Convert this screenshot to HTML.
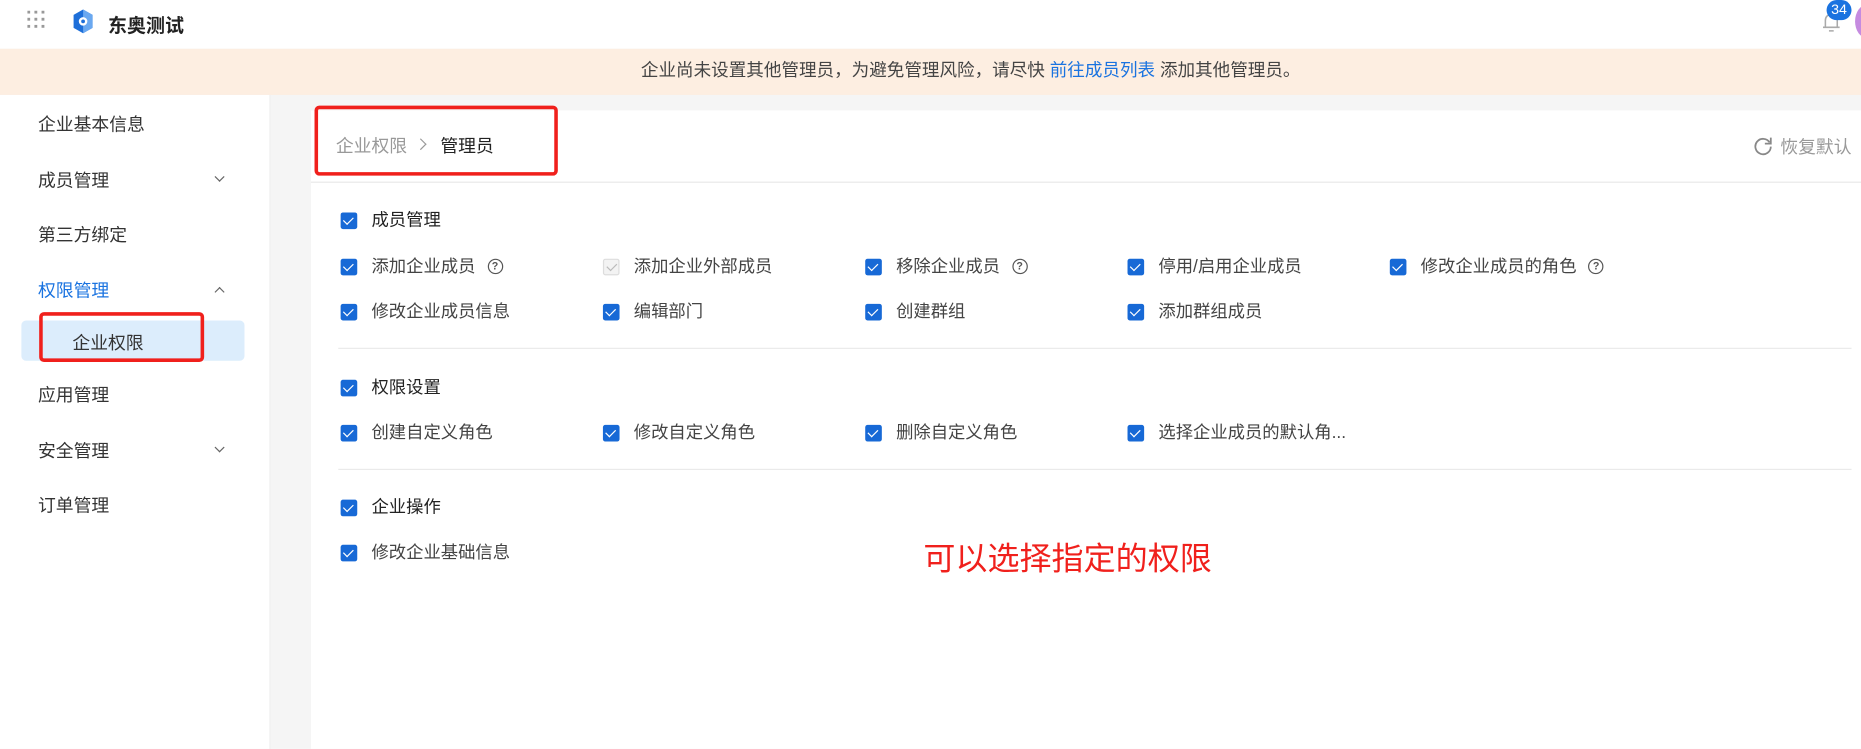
<!DOCTYPE html>
<html><head><meta charset="utf-8">
<style>
*{margin:0;padding:0;box-sizing:border-box}
html,body{width:1861px;height:749px;overflow:hidden;background:#fff}
body{font-family:"Liberation Sans","Noto Sans CJK SC",sans-serif;color:#333}
#w{position:absolute;left:0;top:0;width:1568px;height:631px;transform:scale(1.18686);transform-origin:0 0;background:#f5f5f5}
.a{position:absolute;white-space:nowrap}
.cb{position:absolute;width:14px;height:14px;background:#1769d6;border-radius:2px}
.cb:after{content:"";position:absolute;left:4px;top:1.5px;width:4px;height:7px;border:solid #fff;border-width:0 1.6px 1.6px 0;transform:rotate(45deg)}
.cb.d{background:#f3f3f3;border:1px solid #ddd}
.cb.d:after{border-color:#bbb;left:3.5px;top:0.5px}
.t{font-size:14.6px;color:#444;line-height:16px}
.q{display:inline-block;width:13px;height:13px;border:1.2px solid #555;border-radius:50%;font-size:9px;line-height:11px;text-align:center;color:#555;margin-left:10px;vertical-align:2px;font-weight:bold}
.side{font-size:15px;color:#333}
.chev{position:absolute;width:6px;height:6px;border:solid #666;border-width:0 1.3px 1.3px 0}
.red{position:absolute;border:3px solid #f0201c;border-radius:4px}
</style></head><body><div id="w">
<div class="a" style="left:0;top:0;width:1568px;height:41px;background:#fff"></div>
<svg class="a" style="left:23px;top:9px" width="16" height="16"><g fill="#999"><rect x="0" y="0" width="2.4" height="2.4"/><rect x="6" y="0" width="2.4" height="2.4"/><rect x="12" y="0" width="2.4" height="2.4"/><rect x="0" y="6" width="2.4" height="2.4"/><rect x="6" y="6" width="2.4" height="2.4"/><rect x="12" y="6" width="2.4" height="2.4"/><rect x="0" y="12" width="2.4" height="2.4"/><rect x="6" y="12" width="2.4" height="2.4"/><rect x="12" y="12" width="2.4" height="2.4"/></g></svg>
<svg class="a" style="left:61px;top:7px" width="18" height="22" viewBox="0 0 18 22"><path d="M9 1 L17 5.5 V16.5 L9 21 L1 16.5 V5.5Z" fill="#1e6fd9"/><path d="M9 1 L17 5.5 V16.5 L9 21Z" fill="#6aa8f0"/><circle cx="9" cy="11" r="3.6" fill="#fff"/><circle cx="9" cy="11" r="1.6" fill="#1e6fd9"/></svg>
<div class="a" style="left:91px;top:8px;font-size:16px;font-weight:bold;color:#222">东奥测试</div>
<svg class="a" style="left:1535px;top:10px" width="16" height="18"><path d="M3 13V7a5 5 0 0 1 10 0v6M1 13h14M6 16h4" stroke="#aaa" stroke-width="1.3" fill="none"/></svg>
<div class="a" style="left:1539px;top:0;width:21px;height:17px;border-radius:9px;background:#1a73e0;color:#fff;font-size:12px;line-height:17px;text-align:center">34</div>
<div class="a" style="left:1563px;top:4px;width:20px;height:28px;border-radius:50%;background:#c58be0"></div>
<div class="a" style="left:540px;top:41px;height:39px;font-size:14.8px;line-height:39px;color:#444">企业尚未设置其他管理员，为避免管理风险，请尽快 <span style="color:#1a73e0">前往成员列表</span> 添加其他管理员。</div>
<div class="a" style="left:0;top:41px;width:1568px;height:39px;background:#fdeee1;z-index:-1"></div>
<div class="a" style="left:0;top:80px;width:228px;height:551px;background:#fff;border-right:1px solid #eee"></div>
<div class="a side" style="left:32px;top:94px">企业基本信息</div>
<div class="a side" style="left:32px;top:141px">成员管理</div><div class="chev" style="left:182px;top:146px;transform:rotate(45deg)"></div>
<div class="a side" style="left:32px;top:187px">第三方绑定</div>
<div class="a side" style="left:32px;top:234px;color:#1a73e0">权限管理</div><div class="chev" style="left:182px;top:243px;transform:rotate(-135deg)"></div>
<div class="a" style="left:18px;top:270px;width:188px;height:34px;background:#dcedfc;border-radius:4px"></div>
<div class="a side" style="left:61px;top:278px">企业权限</div>
<div class="a side" style="left:32px;top:322px">应用管理</div>
<div class="a side" style="left:32px;top:369px">安全管理</div><div class="chev" style="left:182px;top:374px;transform:rotate(45deg)"></div>
<div class="a side" style="left:32px;top:415px">订单管理</div>
<div class="red" style="left:33px;top:263px;width:139px;height:42px"></div>
<div class="a" style="left:262px;top:93px;width:1306px;height:538px;background:#fff"></div>
<div class="a" style="left:283px;top:112px;font-size:15px;color:#999">企业权限</div>
<div class="chev" style="left:351px;top:118px;width:7px;height:7px;border-color:#999;transform:rotate(-45deg)"></div>
<div class="a" style="left:371px;top:112px;font-size:15px;color:#222">管理员</div>
<div class="red" style="left:265px;top:89px;width:205px;height:59px"></div>
<svg class="a" style="left:1477px;top:114px" width="17" height="17"><path d="M14 6A6.5 6.5 0 1 0 15 9.5" stroke="#888" stroke-width="1.5" fill="none"/><path d="M15 2v5h-5" stroke="#888" stroke-width="1.5" fill="none"/></svg>
<div class="a" style="left:1500px;top:113px;font-size:15px;color:#999">恢复默认</div>
<div class="a" style="left:262px;top:153px;width:1306px;height:1px;background:#e8e8e8"></div>

<div class="cb" style="left:287px;top:179px"></div><div class="a t" style="left:313px;top:178px;color:#222">成员管理</div>
<div class="cb" style="left:287px;top:218px"></div><div class="a t" style="left:313px;top:217px">添加企业成员<span class="q">?</span></div>
<div class="cb d" style="left:508px;top:218px"></div><div class="a t" style="left:534px;top:217px">添加企业外部成员</div>
<div class="cb" style="left:729px;top:218px"></div><div class="a t" style="left:755px;top:217px">移除企业成员<span class="q">?</span></div>
<div class="cb" style="left:950px;top:218px"></div><div class="a t" style="left:976px;top:217px">停用/启用企业成员</div>
<div class="cb" style="left:1171px;top:218px"></div><div class="a t" style="left:1197px;top:217px">修改企业成员的角色<span class="q">?</span></div>
<div class="cb" style="left:287px;top:256px"></div><div class="a t" style="left:313px;top:255px">修改企业成员信息</div>
<div class="cb" style="left:508px;top:256px"></div><div class="a t" style="left:534px;top:255px">编辑部门</div>
<div class="cb" style="left:729px;top:256px"></div><div class="a t" style="left:755px;top:255px">创建群组</div>
<div class="cb" style="left:950px;top:256px"></div><div class="a t" style="left:976px;top:255px">添加群组成员</div>
<div class="a" style="left:285px;top:293px;width:1275px;height:1px;background:#eaeaea"></div>

<div class="cb" style="left:287px;top:320px"></div><div class="a t" style="left:313px;top:319px;color:#222">权限设置</div>
<div class="cb" style="left:287px;top:358px"></div><div class="a t" style="left:313px;top:357px">创建自定义角色</div>
<div class="cb" style="left:508px;top:358px"></div><div class="a t" style="left:534px;top:357px">修改自定义角色</div>
<div class="cb" style="left:729px;top:358px"></div><div class="a t" style="left:755px;top:357px">删除自定义角色</div>
<div class="cb" style="left:950px;top:358px"></div><div class="a t" style="left:976px;top:357px">选择企业成员的默认角...</div>
<div class="a" style="left:285px;top:395px;width:1275px;height:1px;background:#eaeaea"></div>

<div class="cb" style="left:287px;top:421px"></div><div class="a t" style="left:313px;top:420px;color:#222">企业操作</div>
<div class="cb" style="left:287px;top:459px"></div><div class="a t" style="left:313px;top:458px">修改企业基础信息</div>
<div class="a" style="left:778px;top:449px;font-size:27px;color:#f0201c">可以选择指定的权限</div>
</div></body></html>
